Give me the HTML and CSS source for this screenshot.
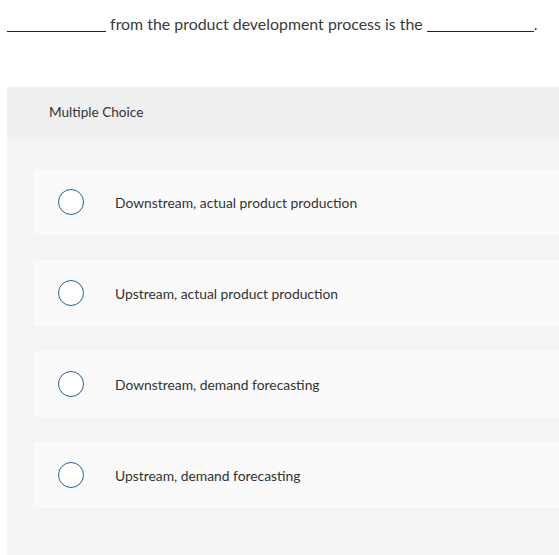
FILE: index.html
```html
<!DOCTYPE html>
<html lang="en">
<head>
<meta charset="utf-8">
<title>Multiple Choice</title>
<link rel="stylesheet" href="styles.css">
</head>
<body>
<p class="question"><span class="blank"></span> from the product development process is the <span class="blank blank-2"></span>.</p>
<section class="panel">
  <div class="panel-head">Multiple Choice</div>
  <div class="panel-body">
    <label class="option"><span class="radio"></span><span class="option-text">Downstream, actual product production</span></label>
    <label class="option"><span class="radio"></span><span class="option-text">Upstream, actual product production</span></label>
    <label class="option"><span class="radio"></span><span class="option-text">Downstream, demand forecasting</span></label>
    <label class="option"><span class="radio"></span><span class="option-text">Upstream, demand forecasting</span></label>
  </div>
</section>
</body>
</html>
```
FILE: styles.css
```css
html, body {
  margin: 0;
  padding: 0;
  background: #ffffff;
  overflow: hidden;
}
body {
  font-family: Lato, "Open Sans", "Liberation Sans", sans-serif;
  color: #333333;
}
.question {
  margin: 14px 0 0 7px;
  font-size: 15.9px;
  line-height: 20px;
  color: #3a3a3a;
}
.blank {
  display: inline-block;
  width: 99px;
  height: 12px;
  border-bottom: 1px solid #222222;
  margin-bottom: -2px;
}
.blank-2 {
  width: 107px;
}
.panel {
  margin: 53px 0 0 7px;
  background: #f4f4f4;
}
.panel-head {
  height: 50px;
  display: flex;
  align-items: center;
  padding-left: 42px;
  background: #efefef;
  font-size: 13.6px;
  color: #333333;
}
.panel-body {
  display: flex;
  flex-direction: column;
  gap: 25px;
  padding: 32px 0 60px 26px;
}
.option {
  height: 66px;
  display: flex;
  align-items: center;
  padding-left: 25px;
  background: #fafafa;
  border-radius: 2px 0 0 2px;
}
.radio {
  width: 24px;
  height: 24px;
  border: 1.5px solid #2d5f95;
  border-radius: 50%;
  background: #ffffff;
  flex: none;
}
.option-text {
  margin-left: 31px;
  font-size: 13.85px;
  color: #333333;
}
```
